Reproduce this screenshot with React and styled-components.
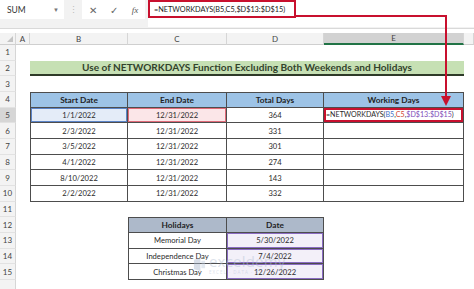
import React from 'react';
import styled, { createGlobalStyle } from 'styled-components';

const GlobalStyle = createGlobalStyle`
  html, body {
    margin: 0;
    padding: 0;
    background: #ffffff;
  }
  body {
    font-family: 'Lato', 'Liberation Sans', sans-serif;
    color: #222;
  }
`;

const COLS = '16px 14px 98px 99px 97px 140px 1fr';
const GRID = '#4d4d4d';
const RED = '#c8102e';

const Window = styled.div`
  position: relative;
  width: 474px;
  height: 289px;
  overflow: hidden;
  background: #fff;
`;

/* formula bar */

const Toolbar = styled.div`
  display: flex;
  align-items: flex-start;
  height: 28px;
  background: #f2f2f2;
  border-bottom: 1px solid #d9d9d9;
`;

const NameBox = styled.div`
  display: flex;
  align-items: center;
  justify-content: space-between;
  box-sizing: border-box;
  width: 64px;
  height: 19px;
  padding: 0 5px 0 7px;
  background: #fff;
  font-size: 8.5px;
  color: #333;
`;

const Caret = styled.span`
  font-size: 6px;
  color: #777;
`;

const Grip = styled.div`
  width: 18px;
  height: 19px;
  display: flex;
  align-items: center;
  justify-content: center;
  color: #bbb;
  font-size: 9px;
`;

const FnButtons = styled.div`
  display: flex;
  align-items: center;
  justify-content: space-around;
  width: 63px;
  height: 19px;
  background: #fff;
  color: #666;
  font-size: 10px;
`;

const Fx = styled.span`
  font-family: 'Liberation Serif', serif;
  font-style: italic;
  font-size: 9px;
  color: #555;
`;

const FormulaInput = styled.div`
  flex: 1;
  height: 27px;
  margin-left: 3px;
  background: #fff;
`;

const FormulaOutline = styled.div`
  display: flex;
  align-items: center;
  box-sizing: border-box;
  width: 148px;
  height: 18px;
  padding-left: 4px;
  border: 2px solid ${RED};
  font-size: 7.3px;
  color: #222;
  white-space: nowrap;
`;

/* sheet */

const Sheet = styled.div`
  display: flex;
  flex-direction: column;
  margin-top: 4px;
`;

const Row = styled.div`
  display: grid;
  grid-template-columns: ${COLS};
  height: ${p => p.$h || 15.67}px;
`;

const ColHead = styled.div`
  display: flex;
  align-items: center;
  justify-content: center;
  box-sizing: border-box;
  background: ${p => (p.$active ? '#d2d2d2' : '#f3f3f3')};
  border-right: 1px solid #d6d6d6;
  border-bottom: ${p => (p.$active ? '2px solid #217346' : '1px solid #cfcfcf')};
  font-size: 8px;
  color: #444;
`;

const Corner = styled(ColHead)`
  position: relative;
  &::after {
    content: '';
    position: absolute;
    right: 2px;
    bottom: 2px;
    border-left: 6px solid transparent;
    border-bottom: 6px solid #c4c4c4;
  }
`;

const RowNum = styled.div`
  display: flex;
  align-items: center;
  justify-content: center;
  box-sizing: border-box;
  background: ${p => (p.$active ? '#d6d6d6' : '#f3f3f3')};
  border-right: 1px solid #d6d6d6;
  border-bottom: 1px solid #e2e2e2;
  font-size: 8px;
  color: #444;
`;

const Blank = styled.div``;

const TitleCell = styled.div`
  grid-column: span 4;
  display: flex;
  align-items: center;
  justify-content: center;
  box-sizing: border-box;
  background: #c6e0b4;
  border-bottom: 2px solid #2e3a28;
  font-weight: 700;
  font-size: 10.1px;
  color: #33432c;
  white-space: nowrap;
`;

const TableCell = styled.div`
  display: flex;
  align-items: center;
  justify-content: ${p => (p.$left ? 'flex-start' : 'center')};
  box-sizing: border-box;
  padding-left: ${p => (p.$left ? '2px' : '0')};
  background: ${p => p.$bg || '#fff'};
  border-right: 1px solid ${GRID};
  border-bottom: 1px solid ${GRID};
  border-left: ${p => (p.$first ? `1px solid ${GRID}` : 'none')};
  border-top: ${p => (p.$top ? `1px solid ${GRID}` : 'none')};
  box-shadow: ${p => (p.$ring ? `inset 0 0 0 ${p.$ringW || 1}px ${p.$ring}` : 'none')};
  font-size: ${p => (p.$bold ? '8.3px' : p.$small ? '7.1px' : '7.6px')};
  font-weight: ${p => (p.$bold ? 700 : 400)};
  color: ${p => (p.$bold ? '#1f1f1f' : '#2a2a2a')};
  white-space: nowrap;
  overflow: hidden;
`;

const Ref = styled.span`
  color: ${p => p.$c};
`;

const Overlay = styled.svg`
  position: absolute;
  left: 0;
  top: 0;
  pointer-events: none;
`;

const Watermark = styled.div`
  position: absolute;
  left: 193px;
  top: 254px;
  display: flex;
  align-items: center;
  gap: 3px;
  opacity: 0.45;
  pointer-events: none;
`;

const WmText = styled.div`
  display: flex;
  flex-direction: column;
  line-height: 1;
  color: #b3c0d4;
  font-family: 'Open Sans', sans-serif;
`;

const WmName = styled.span`
  font-size: 15px;
  letter-spacing: 0.2px;
`;

const WmTag = styled.span`
  font-size: 4.5px;
  letter-spacing: 1px;
  margin-top: 1px;
`;

const mainRows = [
  ['1/1/2022', '12/31/2022', '364'],
  ['2/3/2022', '12/31/2022', '331'],
  ['3/5/2022', '12/31/2022', '301'],
  ['4/1/2022', '12/31/2022', '274'],
  ['8/10/2022', '12/31/2022', '143'],
  ['2/2/2022', '12/31/2022', '332'],
];

const holidays = [
  ['Memorial Day', '5/30/2022'],
  ['Independence Day', '7/4/2022'],
  ['Christmas Day', '12/26/2022'],
];

const blanks = n => Array.from({ length: n }, (_, i) => <Blank key={`b${i}`} />);

const FormulaText = ({ colored }) =>
  colored ? (
    <>
      =NETWORKDAYS(<Ref $c="#3f6fc4">B5</Ref>,<Ref $c="#d2452f">C5</Ref>,
      <Ref $c="#7d4bb8">$D$13:$D$15</Ref>)
    </>
  ) : (
    '=NETWORKDAYS(B5,C5,$D$13:$D$15)'
  );

const App = () => (
  <Window>
    <GlobalStyle />
    <Toolbar>
      <NameBox>
        SUM <Caret>▼</Caret>
      </NameBox>
      <Grip>⋮</Grip>
      <FnButtons>
        <span>✕</span>
        <span>✓</span>
        <Fx>fx</Fx>
      </FnButtons>
      <FormulaInput>
        <FormulaOutline>
          <FormulaText />
        </FormulaOutline>
      </FormulaInput>
    </Toolbar>

    <Sheet>
      <Row $h={12}>
        <Corner />
        {['A', 'B', 'C', 'D'].map(c => (
          <ColHead key={c}>{c}</ColHead>
        ))}
        <ColHead $active>E</ColHead>
        <ColHead />
      </Row>

      <Row>
        <RowNum>1</RowNum>
        {blanks(6)}
      </Row>

      <Row>
        <RowNum>2</RowNum>
        <Blank />
        <TitleCell>Use of NETWORKDAYS Function Excluding Both Weekends and Holidays</TitleCell>
        <Blank />
      </Row>

      <Row>
        <RowNum>3</RowNum>
        {blanks(6)}
      </Row>

      <Row>
        <RowNum>4</RowNum>
        <Blank />
        {['Start Date', 'End Date', 'Total Days', 'Working Days'].map((h, i) => (
          <TableCell key={h} $bold $top $first={i === 0} $bg="#9dc3e6">
            {h}
          </TableCell>
        ))}
        <Blank />
      </Row>

      {mainRows.map(([start, end, total], r) => {
        const active = r === 0;
        return (
          <Row key={start + r}>
            <RowNum $active={active}>{r + 5}</RowNum>
            <Blank />
            <TableCell $first $bg={active ? '#e4ecf8' : '#fff'} $ring={active ? '#5b84c8' : null}>
              {start}
            </TableCell>
            <TableCell $bg={active ? '#fbe6e8' : '#fff'} $ring={active ? '#e06a78' : null}>
              {end}
            </TableCell>
            <TableCell>{total}</TableCell>
            <TableCell $left={active} $small $ring={active ? RED : null} $ringW={2}>
              {active && <FormulaText colored />}
            </TableCell>
            <Blank />
          </Row>
        );
      })}

      <Row>
        <RowNum>11</RowNum>
        {blanks(6)}
      </Row>

      <Row>
        <RowNum>12</RowNum>
        <Blank />
        <Blank />
        <TableCell $bold $top $first $bg="#adb9ca">Holidays</TableCell>
        <TableCell $bold $top $bg="#adb9ca">Date</TableCell>
        <Blank />
        <Blank />
      </Row>

      {holidays.map(([name, date], r) => (
        <Row key={name}>
          <RowNum>{r + 13}</RowNum>
          <Blank />
          <Blank />
          <TableCell $first>{name}</TableCell>
          <TableCell $bg="#f3f0f9" $ring="#8a6cc2">{date}</TableCell>
          <Blank />
          <Blank />
        </Row>
      ))}

      <Row>
        <RowNum />
        {blanks(6)}
      </Row>
    </Sheet>

    <Watermark>
      <svg width="13" height="13" viewBox="0 0 14 14">
        <path d="M1 2 L8 0 L8 14 L1 12 Z" fill="#a9b8ce" />
        <path d="M9 3 H13 V11 H9 Z" fill="#c3cfdf" />
      </svg>
      <WmText>
        <WmName>exceldemy</WmName>
        <WmTag>EXCEL · DATA · BI</WmTag>
      </WmText>
    </Watermark>

    <Overlay width="474" height="289" viewBox="0 0 474 289">
      <path d="M296 16 H446 V98" fill="none" stroke={RED} strokeWidth="2" />
      <polygon points="441,96 451,96 446,106" fill={RED} />
    </Overlay>
  </Window>
);

export default App;
